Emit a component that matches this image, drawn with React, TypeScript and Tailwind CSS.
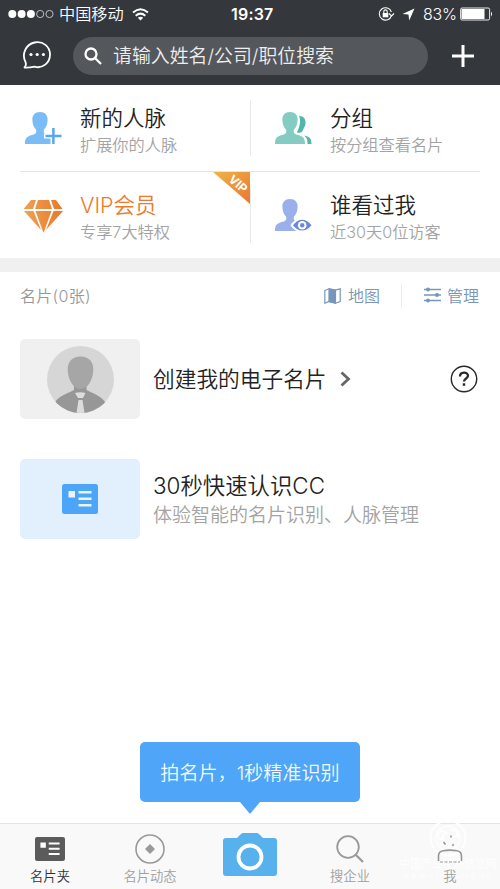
import React from 'react';

interface FeatureProps {
  icon: React.ReactNode;
  title: string;
  sub: string;
  vip?: boolean;
}

const Feature = ({ icon, title, sub, vip = false }: FeatureProps) => (
  <div className="relative flex h-full w-1/2 pl-5 pt-5">
    <div className="w-[60px] shrink-0">{icon}</div>
    <div className="whitespace-nowrap">
      <div className={`text-[21.5px] leading-[27px] ${vip ? 'text-[#ec7a2c]' : 'text-[#222222]'}`}>{title}</div>
      <div className="text-[16.2px] leading-[27px] text-[#a3a3a3]">{sub}</div>
    </div>
    {vip && (
      <svg className="absolute right-0 top-0 overflow-visible" width="37" height="32" viewBox="0 0 37 32">
        <defs>
          <linearGradient id="ribbon" x1="0" y1="0" x2="1" y2="1">
            <stop offset="0" stopColor="#f0b447" />
            <stop offset="1" stopColor="#e87632" />
          </linearGradient>
        </defs>
        <path d="M0 0H37V32Z" fill="url(#ribbon)" />
        <text x="25" y="16" transform="rotate(41 25 12)" textAnchor="middle" fontSize="12" fontWeight="700" fontFamily="Inter, sans-serif" fill="#fff">VIP</text>
      </svg>
    )}
  </div>
);

const PERSON = 'M20 1C15 1 12 4.500 12.400 9C12.500 13 13.500 16 16 18.500C17 21 16 23 13 23.800C7 25.500 5 26.500 5 33H35C35 26.500 33 25.500 27 23.800C24 23 23 21 24 18.500C26.500 16 27.500 13 27.600 9C28 4.500 25 1 20 1Z';

const AddPersonIcon = () => (
  <svg className="mt-[6px]" width="45" height="36" viewBox="0 0 45 36">
    <path d={PERSON} fill="#7abdf6" />
    <path d="M33 15.500V33M24 24.900H42" stroke="#fff" strokeWidth="5" />
    <path d="M33.400 17V33M25.500 24.900H41.500" stroke="#55a7f2" strokeWidth="2.500" />
  </svg>
);

const GroupIcon = () => (
  <svg className="mt-[6px]" width="45" height="36" viewBox="0 0 45 36">
    <path d="M29 5C34 5 36 8.500 35.500 13C35 16 33 18 32 21C31 22 26 22 27 21C30 16 31 9 29 5Z" fill="#52b6a9" />
    <path d="M34 24.500C39.500 26 41.500 27 41.500 33H37.500C37.500 28.500 37 27 34 24.500Z" fill="#52b6a9" />
    <path d={PERSON} fill="#84cbc1" stroke="#fff" strokeWidth="1.500" paintOrder="stroke" />
  </svg>
);

const VisitorIcon = () => (
  <svg className="mt-[6px]" width="45" height="36" viewBox="0 0 45 36">
    <path d={PERSON} fill="#9aafeb" />
    <path d="M20.500 27.300C26 18 38 18 44 27.300C38 36.500 26 36.500 20.500 27.300Z" fill="#fff" />
    <path d="M23 27.300C28 19.800 36 19.800 41.500 27.300C36 34.300 28 34.300 23 27.300Z" fill="#6987dc" />
    <circle cx="32.200" cy="27.200" r="4.300" fill="#fff" />
    <circle cx="32.200" cy="27.200" r="2.200" fill="#6987dc" />
  </svg>
);

const DiamondIcon = () => (
  <svg className="mt-[8px]" width="45" height="36" viewBox="0 0 45 36">
    <defs>
      <linearGradient id="gem">
        <stop offset="0" stopColor="#efa255" />
        <stop offset="1" stopColor="#e87829" />
      </linearGradient>
    </defs>
    <path d="M11 0H16L13 9H3.500ZM18 0H29L32 9H15ZM31 0H36L42.500 9H34Z" fill="url(#gem)" />
    <path d="M4 11H13.500L21 30ZM15.500 11H31.500L23.500 33ZM33.500 11H43L26 30Z" fill="url(#gem)" />
  </svg>
);

const CardIcon = ({ className = '', mark = '#fff' }: { className?: string; mark?: string }) => (
  <svg className={className} viewBox="0 0 36 30" preserveAspectRatio="none">
    <rect width="36" height="30" rx="2.500" fill="currentColor" />
    <path d="M6.500 7H13V13.500H6.500ZM16.500 7H29.500V9.500H16.500ZM16.500 13.500H29.500V16H16.500ZM16.500 20H29.500V22.500H16.500Z" fill={mark} />
  </svg>
);

const StatusBar = () => (
  <div className="flex h-[28px] items-center whitespace-nowrap text-[16.2px] text-white">
    <svg className="ml-2 shrink-0" width="48" height="10" viewBox="0 0 48 10">
      <g fill="#fff">
        <circle cx="4.300" cy="5" r="4" />
        <circle cx="13.600" cy="5" r="4" />
        <circle cx="22.900" cy="5" r="4" />
      </g>
      <g fill="none" stroke="#dcdddf" strokeWidth=".8">
        <circle cx="32.200" cy="5" r="3.600" />
        <circle cx="41.500" cy="5" r="3.600" />
      </g>
    </svg>
    <span className="ml-[3px] w-[66px]">中国移动</span>
    <svg className="ml-[7px]" width="17" height="13" viewBox="0 0 17 13" fill="none" stroke="#fff" strokeWidth="2">
      <path d="M1 4.500Q8.500 -2 16 4.500M3.700 7.700Q8.500 3.500 13.300 7.700" />
      <path d="M8.500 12.500L5.800 9.800Q8.500 7.800 11.200 9.800Z" fill="#fff" stroke="none" />
    </svg>
    <span className="ml-[82px] w-[50px] text-[16px] font-semibold tracking-[0.2px]">19:37</span>
    <svg className="ml-[97px]" width="17" height="16" viewBox="0 0 17 16" fill="none" stroke="#fff" strokeWidth="1.100">
      <path d="M13.500 9.500A6.200 6.200 0 1 1 13.400 6M11 7.500L13.600 10L16 7.500" />
      <rect x="4.700" y="7" width="5.600" height="4.300" fill="#fff" stroke="none" />
      <path d="M5.800 7V5.600A1.700 1.700 0 0 1 9.200 5.600V7" />
    </svg>
    <svg className="ml-[7px]" width="13" height="13" viewBox="0 0 13 13">
      <path d="M12.500 .5L7.200 12.500L6.500 6.500L.5 6Z" fill="#fff" />
    </svg>
    <span className="ml-[8px] w-[34px] text-[16px] tracking-[-0.2px]">83%</span>
    <svg className="ml-[3px]" width="34" height="14" viewBox="0 0 34 14">
      <rect x=".6" y="1" width="29" height="12" rx="1.500" fill="none" stroke="#fff" strokeWidth=".9" />
      <rect x="1.500" y="2" width="23" height="10" fill="#fff" />
      <path d="M31 4.500Q33 7 31 9.500Z" fill="#fff" />
    </svg>
  </div>
);

const Header = () => (
  <header className="h-[85px] bg-[#34373c]">
    <StatusBar />
    <div className="flex h-[56px] items-center">
      <svg className="ml-[22px] mt-[-3px] shrink-0" width="30" height="30" viewBox="0 0 30 30">
        <path d="M2.500 27.500C4 26 4.300 24.500 3.500 22C-.5 14.500 3.500 4.500 12.500 2.500C21 .8 28 6.500 28 14.500C28 23 20.500 29 12.500 26.700C10 27.200 6 27.700 2.500 27.500Z" fill="none" stroke="#fff" strokeWidth="1.800" strokeLinejoin="round" />
        <g fill="#fff">
          <circle cx="9" cy="14.500" r="1.600" />
          <circle cx="15.200" cy="14.500" r="1.600" />
          <circle cx="21.400" cy="14.500" r="1.600" />
        </g>
      </svg>
      <div className="ml-[21px] flex h-[38px] w-[355px] items-center rounded-full bg-[#54575b]">
        <svg className="ml-[11px] shrink-0" width="18" height="18" viewBox="0 0 18 18" fill="none" stroke="#fff" strokeWidth="2.300">
          <circle cx="7" cy="7" r="5.500" />
          <path d="M11 11L17 17" />
        </svg>
        <span className="ml-[11px] whitespace-nowrap pt-0.5 text-[18.9px] text-[#eeeeef]">请输入姓名/公司/职位搜索</span>
      </div>
      <svg className="ml-6" width="22" height="22" viewBox="0 0 22 22" stroke="#fff" strokeWidth="3">
        <path d="M11 0V22M0 11H22" />
      </svg>
    </div>
  </header>
);

const Toolbar = () => (
  <div className="flex h-[47px] items-center whitespace-nowrap text-[16px] text-[#7796b8]">
    <span className="ml-5 text-[16px] tracking-[0.3px] text-[#979797]">名片(0张)</span>
    <div className="ml-auto flex items-center">
      <svg className="mr-[7px]" width="17" height="16" viewBox="0 0 17 16" fill="none" stroke="currentColor" strokeWidth="1.200">
        <path d="M.8 2.500L5 .8L11.500 2.200L16.200 .8V13.500L11.500 15.200L5 13.500L.8 15.200Z" />
        <path d="M5 .8L11.500 2.200V15.200L5 13.500Z" fill="currentColor" />
      </svg>
      地图
    </div>
    <div className="ml-[21px] h-[26px] w-px bg-[#ececec]" />
    <div className="ml-[22px] mr-[21px] flex items-center">
      <svg className="mr-[6px] mt-[-2px]" width="17" height="16" viewBox="0 0 17 16" fill="currentColor" stroke="currentColor" strokeWidth="1.300">
        <path d="M0 2.500H17M0 8H17M0 13.500H17" />
        <circle cx="4" cy="2.500" r="1.300" />
        <circle cx="13" cy="8" r="1.300" />
        <circle cx="4" cy="13.500" r="1.300" />
      </svg>
      管理
    </div>
  </div>
);

const Avatar = () => (
  <svg width="67" height="67" viewBox="0 0 67 67">
    <defs>
      <clipPath id="round"><circle cx="33.500" cy="33.500" r="33.500" /></clipPath>
    </defs>
    <g clipPath="url(#round)">
      <rect width="67" height="67" fill="#d6d6d6" />
      <path d="M27 38H39.500V44C45 47 53 49 58 56V67H8V56C13 49 22 47 27 44Z" fill="#979797" />
      <path d="M33.500 10.500C25 10.500 20.500 16 20.700 24C21 34 26.500 43 33.500 43C40.500 43 46 34 46.300 24C46.500 16 42 10.500 33.500 10.500Z" fill="#a6a6a6" />
      <path d="M28 47Q33 45.500 38.500 47L36 52H31ZM31.500 54H35.500L37.500 67H29.500Z" fill="#dcdcdc" />
    </g>
  </svg>
);

const Tab = ({ label, active = false, children }: { label: string; active?: boolean; children?: React.ReactNode }) => (
  <div className={`flex w-[100px] flex-col items-center ${active ? 'text-[#333333]' : 'text-[#a0a0a0]'}`}>
    <div className="flex h-[42px] items-center justify-center pt-[8px]">{children}</div>
    <span className="relative z-10 text-[13.3px] leading-[20px]">{label}</span>
  </div>
);

const TabBar = () => (
  <nav className="relative flex h-[66px] border-t border-[#e5e5e5] bg-[#f9f9f9]">
    <Tab label="名片夹" active>
      <CardIcon className="h-6 w-[30px] text-[#5b5b5b]" />
    </Tab>
    <Tab label="名片动态">
      <svg width="30" height="30" viewBox="0 0 30 30">
        <circle cx="15" cy="15" r="14" fill="none" stroke="#999" strokeWidth="1.600" />
        <path d="M15 10L20 15L15 20L10 15Z" fill="#999" />
      </svg>
    </Tab>
    <div className="flex w-[100px] justify-center pt-[9px]">
      <svg width="54" height="43" viewBox="0 0 54 43">
        <path d="M3 5H14L18 1Q19 0 20.500 0H33.500Q35 0 36 1L40 5H51Q54 5 54 8V40Q54 43 51 43H3Q0 43 0 40V8Q0 5 3 5Z" fill="#57b1ed" />
        <circle cx="27" cy="24" r="11.500" fill="none" stroke="#fff" strokeWidth="3.800" />
      </svg>
    </div>
    <Tab label="搜企业">
      <svg width="28" height="28" viewBox="0 0 28 28" fill="none" stroke="#999" strokeWidth="1.800">
        <circle cx="12" cy="12" r="10.800" />
        <path d="M19.500 19.500L27 27" strokeWidth="2.200" />
      </svg>
    </Tab>
    <Tab label="我">
      <svg className="relative z-10" width="26" height="28" viewBox="0 0 26 28" fill="none" stroke="#969696" strokeWidth="1.600">
        <path d="M1.500 26V21Q1.500 16.500 6 15.800Q13 14.500 20 15.800Q24.500 16.500 24.500 21V26" />
        <path d="M3 27H23" strokeDasharray="3 1.500" strokeWidth="1.200" />
        <path d="M14 .5V2.500M6.500 7L8.500 9.500M16.500 9L15.500 11" />
      </svg>
    </Tab>
    {/* watermark under the last two tabs */}
    <div className="absolute right-[3px] top-[-5px] flex w-[98px] flex-col items-center text-white">
      <svg width="38" height="38" viewBox="0 0 38 38" fill="none" stroke="#fff" strokeWidth="1.800">
        <circle cx="19" cy="19" r="17.500" />
        <circle cx="19" cy="19" r="12" strokeWidth="1.200" />
        <path d="M9 16Q13 8 18 14Q13 15 14 20Q9 21 9 16ZM21 11Q28 10 29 17L24 18M12 24Q18 31 26 25" strokeWidth="1.600" />
      </svg>
      <span className="mt-[2px] whitespace-nowrap text-[10.8px] leading-[12px]">中国产业经济信息网</span>
      <span className="whitespace-nowrap text-[8px] leading-[8px] tracking-[1.600px]">www.cinic.org.cn</span>
    </div>
  </nav>
);

const App = () => {
  return (
    <div className="flex h-[889px] w-[500px] flex-col overflow-hidden bg-white font-['Inter','Noto_Sans_CJK_SC',sans-serif] font-[350]">
      <Header />

      <section className="h-[173px]">
        <div className="flex h-[86px] items-center">
          <Feature icon={<AddPersonIcon />} title="新的人脉" sub="扩展你的人脉" />
          <div className="-mr-px h-14 w-px bg-[#e8e8e8]" />
          <Feature icon={<GroupIcon />} title="分组" sub="按分组查看名片" />
        </div>
        <div className="mx-5 h-px bg-[#e5e5e5]" />
        <div className="flex h-[86px] items-center">
          <Feature icon={<DiamondIcon />} title="VIP会员" sub="专享7大特权" vip />
          <div className="-mr-px h-14 w-px bg-[#e8e8e8]" />
          <Feature icon={<VisitorIcon />} title="谁看过我" sub="近30天0位访客" />
        </div>
      </section>

      <div className="h-[14px] bg-[#f0f0f0]" />
      <Toolbar />

      <div className="mt-[20px] flex h-20 items-center pl-5 pr-[22px]">
        <div className="flex h-20 w-[120px] items-center justify-center rounded-[5px] bg-[#f0f0f0]">
          <Avatar />
        </div>
        <span className="ml-[13px] whitespace-nowrap text-[21.7px] text-[#222222]">创建我的电子名片</span>
        <svg className="ml-[13px]" width="11" height="16" viewBox="0 0 11 16" fill="none" stroke="#666" strokeWidth="2.800">
          <path d="M1.500 1.500L8.500 8L1.500 14.500" />
        </svg>
        <svg className="ml-auto" width="28" height="28" viewBox="0 0 28 28" fill="none" stroke="#292929">
          <circle cx="14" cy="14" r="12.700" strokeWidth="1.400" />
          <path d="M10 11.500C10 6.500 18 6.500 18 10.800C18 13.500 14 13.500 14 16.500" strokeWidth="2.300" />
          <path d="M14 18.300V20.800" strokeWidth="2.500" />
        </svg>
      </div>

      <div className="mt-10 flex h-20 items-center pl-5">
        <div className="flex h-20 w-[120px] items-center justify-center rounded-[5px] bg-[#e2f0fe]">
          <CardIcon className="h-[30px] w-9 text-[#4da5f8]" mark="#e8f5ff" />
        </div>
        <div className="ml-[13px] whitespace-nowrap pt-0.5">
          <div className="text-[22.4px] leading-[30px] text-[#222222]">30秒快速认识CC</div>
          <div className="text-[19px] leading-[29px] text-[#a3a3a3]">体验智能的名片识别、人脉管理</div>
        </div>
      </div>

      <div className="mt-auto flex flex-col items-center pb-[9px]">
        <div className="flex h-[60px] w-[220px] items-center justify-center whitespace-nowrap rounded-[5px] bg-[#4fa5f8] pt-0.5 text-[19.1px] text-[#eff9ff]">
          拍名片，1秒精准识别
        </div>
        <svg width="20" height="12" viewBox="0 0 20 12">
          <path d="M0 0H20L10 12Z" fill="#4fa5f8" />
        </svg>
      </div>
      <TabBar />
    </div>
  );
};

export default App;
